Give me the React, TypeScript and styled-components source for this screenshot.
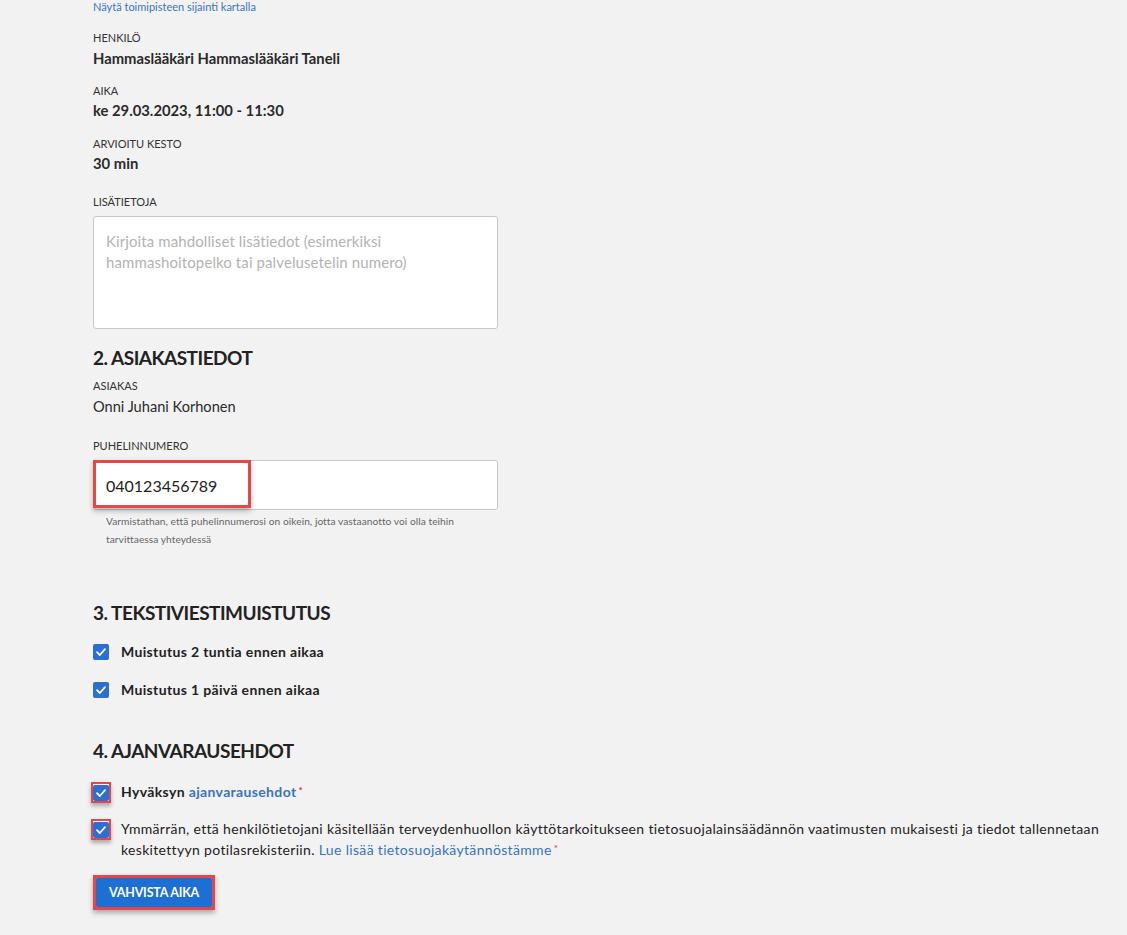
import React from "react";
import styled, { createGlobalStyle } from "styled-components";

const Global = createGlobalStyle`
  html, body { margin: 0; padding: 0; background: #f2f2f2; }
  body { font-family: Lato, "Open Sans", sans-serif; color: #222; }
  * { box-sizing: border-box; }
`;

const Page = styled.main`
  padding: 0 12px 24px 93px;
  width: 1127px;
`;

const TopLink = styled.a`
  display: block;
  font-size: 11px;
  line-height: 14px;
  color: #3a72c4;
  text-decoration: none;
`;

const Field = styled.div<{ $top: number }>`
  margin-top: ${(p) => p.$top}px;
`;

const Label = styled.div<{ $gap?: number }>`
  font-size: 11px;
  line-height: 14px;
  color: #333;
  text-transform: uppercase;
  margin-bottom: ${(p) => p.$gap ?? 3}px;
`;

const Value = styled.div<{ $bold?: boolean }>`
  font-size: ${(p) => (p.$bold ? 14.8 : 14.6)}px;
  line-height: 20px;
  font-weight: ${(p) => (p.$bold ? 700 : 400)};
  color: #2a2a2a;
`;

const TextArea = styled.textarea`
  display: block;
  width: 405px;
  height: 113px;
  border: 1px solid #c8c8c8;
  border-radius: 3px;
  background: #fff;
  padding: 14px 12px;
  font-family: Lato, sans-serif;
  font-size: 15px;
  line-height: 21px;
  letter-spacing: 0.1px;
  resize: none;
  outline: none;
  &::placeholder { color: #b3b3b3; }
`;

const Heading = styled.h2<{ $top: number }>`
  margin: ${(p) => p.$top}px 0 0;
  font-size: 19px;
  line-height: 24px;
  font-weight: 700;
  color: #222;
  letter-spacing: -0.5px;
`;

const InputWrap = styled.div`
  position: relative;
  width: 405px;
`;

const PhoneInput = styled.input`
  display: block;
  width: 405px;
  height: 50px;
  border: 1px solid #c8c8c8;
  border-radius: 3px;
  background: #fff;
  padding: 0 12px;
  font-family: Lato, sans-serif;
  font-size: 16px;
  color: #222;
  outline: none;
`;

const Highlight = styled.div`
  position: absolute;
  left: 0;
  top: 0;
  width: 158px;
  height: 48px;
  border: 3px solid #e2474a;
  box-shadow: 0 3px 5px rgba(0, 0, 0, 0.28);
  pointer-events: none;
`;

const Helper = styled.div`
  width: 405px;
  padding: 0 13px;
  margin-top: 2px;
  font-size: 10.2px;
  line-height: 18px;
  letter-spacing: 0.05px;
  color: #666;
`;

const Row = styled.label<{ $top: number }>`
  display: flex;
  align-items: flex-start;
  gap: 12px;
  margin-top: ${(p) => p.$top}px;
  cursor: pointer;
`;

const BoxHolder = styled.span<{ $marked?: boolean }>`
  flex: none;
  display: flex;
  align-items: center;
  justify-content: center;
  width: 16px;
  height: 20px;
  ${(p) =>
    p.$marked
      ? `
    margin-left: -2px;
    margin-right: -2px;
    width: 20px;
    height: 21px;
    border: 2px solid #e2474a;
    box-shadow: 0 3px 4px rgba(0,0,0,0.3);
  `
      : ""}
`;

const Box = styled.span`
  width: 16px;
  height: 16px;
  border-radius: 2px;
  background: #2a6fd3;
  display: flex;
  align-items: center;
  justify-content: center;
`;

const RowText = styled.span<{ $bold?: boolean }>`
  font-size: 14px;
  line-height: 21px;
  letter-spacing: ${(p) => (p.$bold ? 0.35 : 0.33)}px;
  font-weight: ${(p) => (p.$bold ? 700 : 400)};
  color: #222;
  margin-top: -1px;
`;

const InlineLink = styled.a<{ $bold?: boolean }>`
  color: #3a72c4;
  text-decoration: none;
  font-weight: ${(p) => (p.$bold ? 700 : 400)};
`;

const Star = styled.span`
  color: #e03030;
  font-size: 10px;
  line-height: 1;
  vertical-align: 3px;
  margin-left: 2px;
`;

const ButtonFrame = styled.div`
  display: inline-block;
  margin-top: 15px;
  border: 3px solid #e2474a;
  box-shadow: 0 3px 5px rgba(0, 0, 0, 0.3);
`;

const Button = styled.button`
  display: block;
  width: 116px;
  height: 29px;
  border: none;
  border-radius: 1px;
  background: #1d6fd3;
  color: #fff;
  font-family: Lato, sans-serif;
  font-size: 12.5px;
  font-weight: 700;
  letter-spacing: -0.2px;
  cursor: pointer;
`;

const Check = ({ marked }: { marked?: boolean }) => (
  <BoxHolder $marked={marked}>
    <Box>
      <svg width="12" height="12" viewBox="0 0 12 12" fill="none">
        <path d="M2 6.2 L4.8 9 L10 3.2" stroke="#fff" strokeWidth="1.8" strokeLinecap="round" strokeLinejoin="round" />
      </svg>
    </Box>
  </BoxHolder>
);

export default function App() {
  return (
    <>
      <Global />
      <Page>
        <TopLink href="#">Näytä toimipisteen sijainti kartalla</TopLink>

        <Field $top={17}>
          <Label>Henkilö</Label>
          <Value $bold>Hammaslääkäri Hammaslääkäri Taneli</Value>
        </Field>
        <Field $top={16}>
          <Label $gap={2}>Aika</Label>
          <Value $bold>ke 29.03.2023, 11:00 - 11:30</Value>
        </Field>
        <Field $top={17}>
          <Label $gap={2}>Arvioitu kesto</Label>
          <Value $bold>30 min</Value>
        </Field>
        <Field $top={22}>
          <Label $gap={7}>Lisätietoja</Label>
          <TextArea placeholder="Kirjoita mahdolliset lisätiedot (esimerkiksi hammashoitopelko tai palvelusetelin numero)" />
        </Field>

        <Heading $top={17}>2. ASIAKASTIEDOT</Heading>
        <Field $top={9}>
          <Label $gap={4}>Asiakas</Label>
          <Value>Onni Juhani Korhonen</Value>
        </Field>
        <Field $top={22}>
          <Label $gap={7}>Puhelinnumero</Label>
          <InputWrap>
            <PhoneInput defaultValue="040123456789" />
            <Highlight />
          </InputWrap>
          <Helper>
            Varmistathan, että puhelinnumerosi on oikein, jotta vastaanotto voi olla teihin tarvittaessa yhteydessä
          </Helper>
        </Field>

        <Heading $top={53}>3. TEKSTIVIESTIMUISTUTUS</Heading>
        <Row $top={17}>
          <Check />
          <RowText $bold>Muistutus 2 tuntia ennen aikaa</RowText>
        </Row>
        <Row $top={18}>
          <Check />
          <RowText $bold>Muistutus 1 päivä ennen aikaa</RowText>
        </Row>

        <Heading $top={39}>4. AJANVARAUSEHDOT</Heading>
        <Row $top={19}>
          <Check marked />
          <RowText $bold>
            Hyväksyn <InlineLink href="#" $bold>ajanvarausehdot</InlineLink>
            <Star>*</Star>
          </RowText>
        </Row>
        <Row $top={16}>
          <Check marked />
          <RowText>
            Ymmärrän, että henkilötietojani käsitellään terveydenhuollon käyttötarkoitukseen tietosuojalainsäädännön vaatimusten mukaisesti ja tiedot tallennetaan keskitettyyn potilasrekisteriin.{" "}
            <InlineLink href="#">Lue lisää tietosuojakäytännöstämme</InlineLink>
            <Star>*</Star>
          </RowText>
        </Row>

        <ButtonFrame>
          <Button>VAHVISTA AIKA</Button>
        </ButtonFrame>
      </Page>
    </>
  );
}
